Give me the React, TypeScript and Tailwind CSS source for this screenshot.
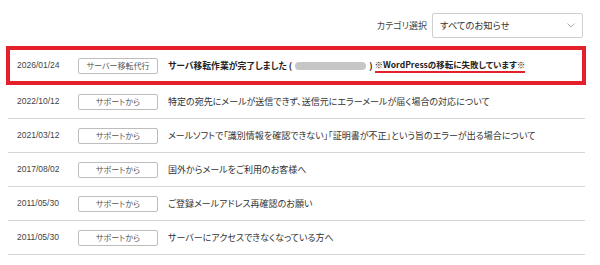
const rows = [
  { date: "2022/10/12", tag: "サポートから", title: "特定の宛先にメールが送信できず、送信元にエラーメールが届く場合の対応について" },
  { date: "2021/03/12", tag: "サポートから", title: "メールソフトで「識別情報を確認できない」「証明書が不正」という旨のエラーが出る場合について" },
  { date: "2017/08/02", tag: "サポートから", title: "国外からメールをご利用のお客様へ" },
  { date: "2011/05/30", tag: "サポートから", title: "ご登録メールアドレス再確認のお願い" },
  { date: "2011/05/30", tag: "サポートから", title: "サーバーにアクセスできなくなっている方へ" },
];

function Tag({ label }: { label: string }) {
  return (
    <span className="flex h-[16px] w-[80px] shrink-0 items-center justify-center rounded-[2px] border border-[#bdbdbd] text-[8px] leading-none text-[#555]">
      {label}
    </span>
  );
}

export default function App() {
  return (
    <div className="h-[265px] w-[600px] bg-white pt-[13px] font-['Noto_Sans_CJK_JP',sans-serif] text-[#333] [font-feature-settings:'palt']">
      <div className="flex items-center justify-end gap-[5px] pr-[17px]">
        <span className="text-[9px] text-[#444]">カテゴリ選択</span>
        <div className="flex h-[25px] w-[151px] items-center justify-between rounded-[2px] border border-[#cfcfcf] pl-[7px] pr-[7px]">
          <span className="text-[9.3px] text-[#333]">すべてのお知らせ</span>
          <svg width="8" height="5" viewBox="0 0 8 5" fill="none">
            <path d="M0.5 0.5 L4 4 L7.5 0.5" stroke="#aaa" strokeWidth="0.9" />
          </svg>
        </div>
      </div>

      <div className="mx-[6px] mt-[8px] w-[580px]">
        <div className="flex h-[39px] items-center border-4 border-[#e3202b] pl-[7px]">
          <span className="w-[61px] shrink-0 font-['Liberation_Sans',sans-serif] text-[8.5px] text-[#444]">2026/01/24</span>
          <Tag label="サーバー移転代行" />
          <div className="ml-[10px] flex items-center whitespace-nowrap text-[8.8px] font-bold text-[#222]">
            <span>サーバ移転作業が完了しました (</span>
            <span className="mx-[3px] h-[8px] w-[71px] rounded-full bg-[#c6c6c6]" />
            <span>)</span>
            <span className="ml-[2px] border-b-2 border-[#e3202b] pb-[1px] text-[8.5px] leading-[12px]">※WordPressの移転に失敗しています※</span>
          </div>
        </div>

        {rows.map((r, i) => (
          <div key={i} className="ml-[2px] mr-[1px] flex h-[34px] items-center border-b border-[#d6d6d6] pl-[9px]">
            <span className="w-[61px] shrink-0 font-['Liberation_Sans',sans-serif] text-[8.5px] text-[#444]">{r.date}</span>
            <Tag label={r.tag} />
            <span className="ml-[10px] whitespace-nowrap text-[9px] text-[#333]">{r.title}</span>
          </div>
        ))}
      </div>
    </div>
  );
}
